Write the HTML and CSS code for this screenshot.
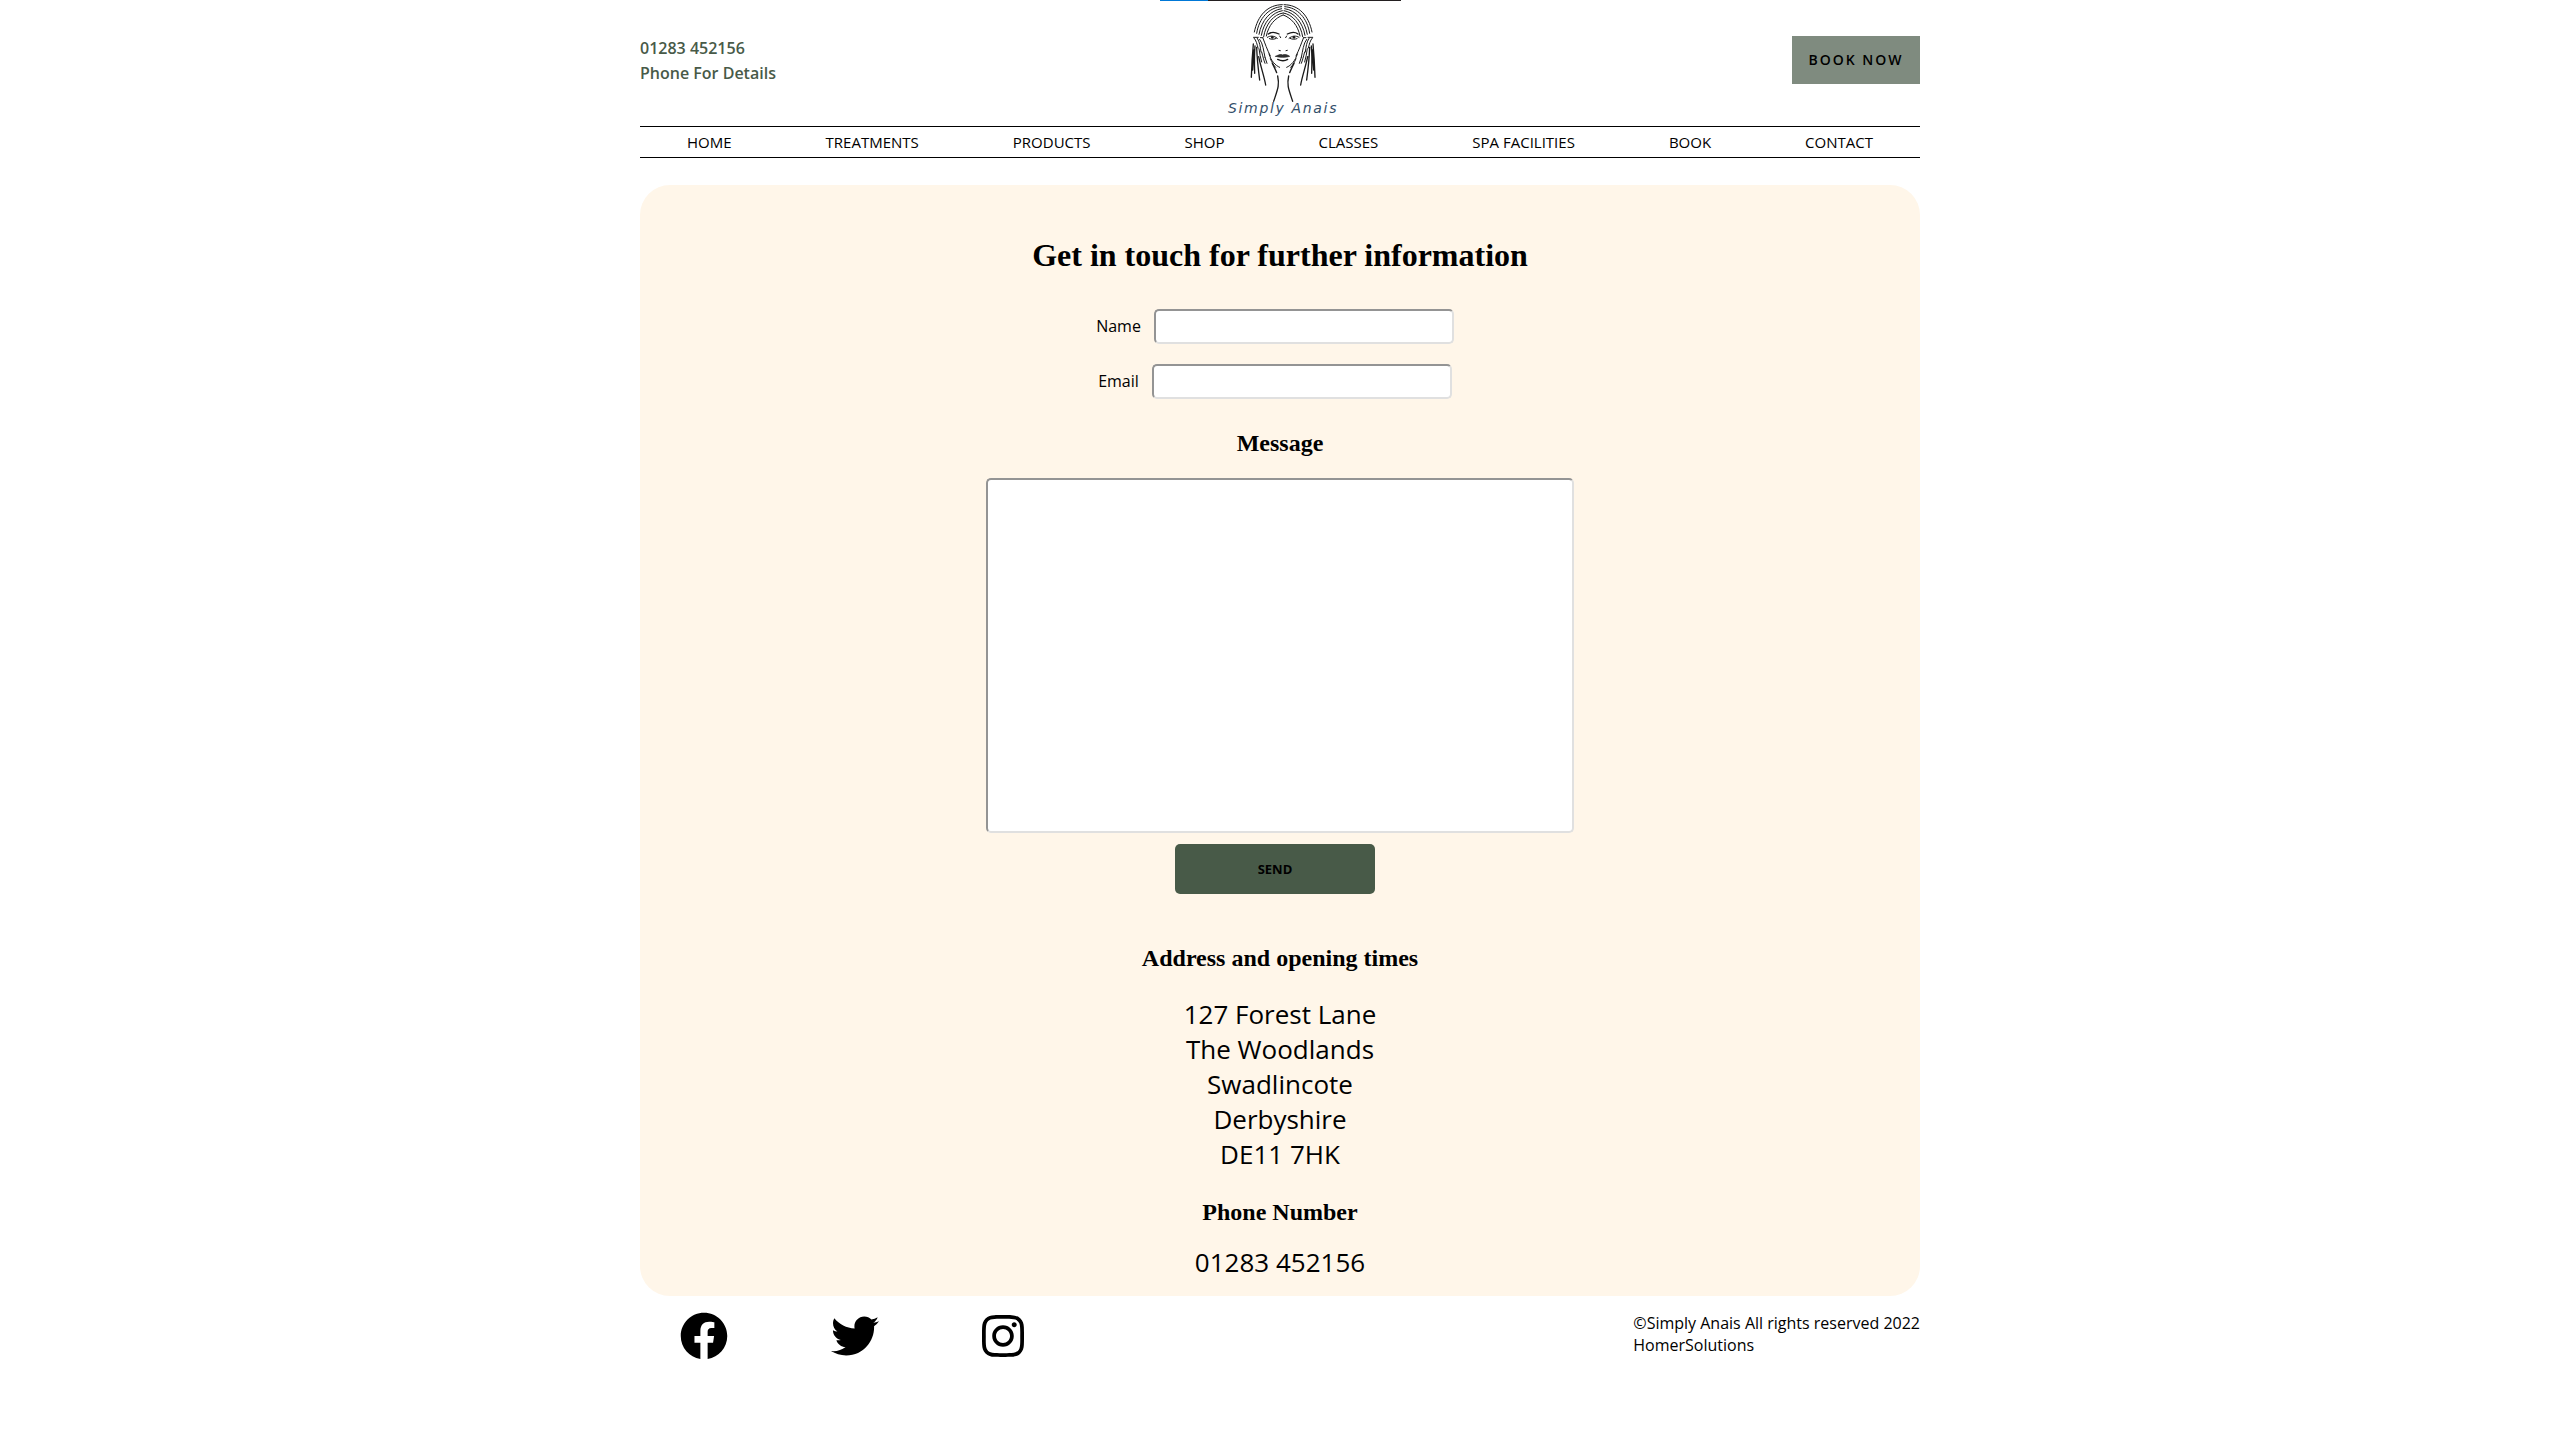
FILE: index.html
```html
<!DOCTYPE html>
<html lang="en">
<head>
<meta charset="utf-8">
<meta name="viewport" content="width=device-width, initial-scale=1">
<title>Simply Anais - Contact</title>
<link rel="stylesheet" href="styles.css">
</head>
<body>
<div class="progress"></div>
<div class="page">
  <header>
    <div class="masthead">
      <p class="phone">01283 452156<br>Phone For Details</p>
      <a class="logo" href="#" aria-label="Simply Anais home">
        <svg viewBox="-2 0 390 360" width="130" height="120" fill="none" stroke="#1a1a1a" stroke-width="3" stroke-linecap="round">
          <g id="half">
            <path d="M188 14C144 14 114 46 104 96M186 20C148 22 118 54 111 100M186 26C152 31 126 60 118 103M188 32C158 37 132 66 125 106M190 39C162 43 138 72 132 110M190 45C166 54 146 76 140 108"/>
            <path d="M146 102C155 95 166 96 178 102" stroke-width="4"/>
            <path d="M143 112C152 106 164 107 173 115M149 116C156 119 165 118 170 115"/>
            <circle cx="158" cy="112" r="4" fill="#1a1a1a" stroke="none"/>
            <path d="M102 112H116M122 113H130M103 114C110 122 112 132 115 144M113 115C120 126 122 140 124 156M130 115C136 130 142 148 152 168M120 118C130 130 132 154 136 172M118 146C120 160 122 172 126 186M126 156C130 170 132 180 136 190M136 172C138 178 140 184 142 190"/>
            <path d="M148 162C154 182 166 196 180 202M152 176C158 190 162 196 168 202"/>
            <path d="M101 132C98 164 96 200 95 232M106 138C104 162 104 190 105 220M111 142C112 172 116 210 120 240M117 170C124 204 134 230 138 255M103 150L99 210" stroke-width="4"/>
            <path d="M158 190C164 202 168 210 171 218M174 228C180 256 174 268 162 304" stroke-width="4"/>
            <path d="M178 151L182 152M180 108L183 113"/>
          </g>
          <use href="#half" transform="translate(381 0) scale(-1 1)"/>
          <path d="M168 169C178 163 184 163 189 165C194 163 202 163 210 169C200 173 178 173 168 169Z" fill="#333" stroke-width="2"/>
          <path d="M174 178C184 183 196 183 204 178" stroke-width="4"/>
          <text class="logo-name" x="25" y="340">Simply Anais</text>
        </svg>
      </a>
      <button class="book" type="button">BOOK NOW</button>
    </div>
    <nav class="menu">
      <a href="#">HOME</a>
      <a href="#">TREATMENTS</a>
      <a href="#">PRODUCTS</a>
      <a href="#">SHOP</a>
      <a href="#">CLASSES</a>
      <a href="#">SPA FACILITIES</a>
      <a href="#">BOOK</a>
      <a href="#">CONTACT</a>
    </nav>
  </header>
  <main class="panel">
    <h1>Get in touch for further information</h1>
    <form class="contact">
      <div class="field"><label for="name">Name</label><input id="name" type="text"></div>
      <div class="field"><label for="email">Email</label><input id="email" type="email"></div>
      <h2><label for="message">Message</label></h2>
      <textarea id="message"></textarea>
      <div class="actions"><button class="send" type="submit">SEND</button></div>
    </form>
    <h2>Address and opening times</h2>
    <address class="details">127 Forest Lane<br>The Woodlands<br>Swadlincote<br>Derbyshire<br>DE11 7HK</address>
    <h2>Phone Number</h2>
    <p class="details">01283 452156</p>
  </main>
  <footer class="footer">
    <div class="social">
      <a href="#" aria-label="Facebook"><svg width="48" height="48" viewBox="0 0 512 512"><path d="M504 256C504 119 393 8 256 8S8 119 8 256c0 123.78 90.69 226.38 209.25 245V327.69h-63V256h63v-54.64c0-62.15 37-96.48 93.67-96.48 27.14 0 55.52 4.84 55.52 4.84v61h-31.28c-30.8 0-40.41 19.12-40.41 38.73V256h68.78l-11 71.69h-57.78V501C413.31 482.38 504 379.78 504 256z"/></svg></a>
      <a href="#" aria-label="Twitter"><svg width="48" height="48" viewBox="0 0 512 512"><path d="M459.37 151.716c.325 4.548.325 9.097.325 13.645 0 138.72-105.583 298.558-298.558 298.558-59.452 0-114.68-17.219-161.137-47.106 8.447.974 16.568 1.299 25.34 1.299 49.055 0 94.213-16.568 130.274-44.832-46.132-.975-84.792-31.188-98.112-72.772 6.498.974 12.995 1.624 19.818 1.624 9.421 0 18.843-1.3 27.614-3.573-48.081-9.747-84.143-51.98-84.143-102.985v-1.299c13.969 7.797 30.214 12.67 47.431 13.319-28.264-18.843-46.781-51.005-46.781-87.391 0-19.492 5.197-37.36 14.294-52.954 51.655 63.675 129.3 105.258 216.365 109.807-1.624-7.797-2.599-15.918-2.599-24.04 0-57.828 46.782-104.934 104.934-104.934 30.213 0 57.502 12.67 76.67 33.137 23.715-4.548 46.456-13.32 66.599-25.34-7.798 24.366-24.366 44.833-46.132 57.827 21.117-2.273 41.584-8.122 60.426-16.243-14.292 20.791-32.161 39.308-52.628 54.253z"/></svg></a>
      <a href="#" aria-label="Instagram"><svg width="42" height="48" viewBox="0 0 448 512"><path d="M224.1 141c-63.6 0-114.9 51.3-114.9 114.9s51.3 114.9 114.9 114.9S339 319.5 339 255.9 287.7 141 224.1 141zm0 189.6c-41.1 0-74.7-33.5-74.7-74.7s33.5-74.7 74.7-74.7 74.7 33.5 74.7 74.7-33.6 74.7-74.7 74.7zm146.4-194.3c0 14.9-12 26.8-26.8 26.8-14.9 0-26.8-12-26.8-26.8s12-26.8 26.8-26.8 26.8 12 26.8 26.8zm76.1 27.2c-1.7-35.9-9.9-67.7-36.2-93.9-26.2-26.2-58-34.4-93.9-36.2-37-2.1-147.9-2.1-184.9 0-35.8 1.7-67.6 9.9-93.9 36.1s-34.4 58-36.2 93.9c-2.1 37-2.1 147.9 0 184.9 1.7 35.9 9.9 67.7 36.2 93.9s58 34.4 93.9 36.2c37 2.1 147.9 2.1 184.9 0 35.9-1.7 67.7-9.9 93.9-36.2 26.2-26.2 34.4-58 36.2-93.9 2.1-37 2.1-147.8 0-184.8zM398.8 388c-7.8 19.6-22.9 34.7-42.6 42.6-29.5 11.7-99.5 9-132.1 9s-102.7 2.6-132.1-9c-19.6-7.8-34.7-22.9-42.6-42.6-11.7-29.5-9-99.5-9-132.1s-2.6-102.7 9-132.1c7.8-19.6 22.9-34.7 42.6-42.6 29.5-11.7 99.5-9 132.1-9s102.7-2.6 132.1 9c19.6 7.8 34.7 22.9 42.6 42.6 11.7 29.5 9 99.5 9 132.1s2.7 102.7-9 132.1z"/></svg></a>
    </div>
    <p class="copyright">©Simply Anais All rights reserved 2022<br>HomerSolutions</p>
  </footer>
</div>
</body>
</html>
```

FILE: styles.css
```css
* {
  box-sizing: border-box;
}

body {
  margin: 0;
  background: #fff;
  color: #000;
  font: 16px/22px "Open Sans", "Noto Sans", sans-serif;
}

p,
h1,
h2 {
  margin: 0;
}

a {
  color: inherit;
  text-decoration: none;
}

button,
input,
textarea {
  font: inherit;
}

.progress {
  position: absolute;
  top: 0;
  left: 50%;
  width: 241px;
  height: 1px;
  margin-left: -120px;
  background: linear-gradient(to right, #0078d7 20%, #231f20 20%);
}

.page {
  max-width: 1280px;
  margin: 0 auto;
}

.masthead {
  display: flex;
  justify-content: space-between;
  align-items: center;
  margin-bottom: 6px;
}

.phone {
  padding-top: 2px;
  color: #485a48;
  font-weight: 600;
  line-height: 25px;
}

.logo svg {
  display: block;
}

.logo-name {
  fill: #34506b;
  stroke: none;
  font: italic 42px "DejaVu Sans", sans-serif;
  letter-spacing: 5px;
}

.book {
  width: 128px;
  height: 48px;
  padding: 0;
  border: 0;
  background: #7f8b7f;
  color: #000;
  font-size: 14px;
  font-weight: 600;
  letter-spacing: 2px;
}

.menu {
  display: flex;
  justify-content: space-around;
  padding: 4px 0;
  border: solid #000;
  border-width: 1px 0;
  font-size: 15px;
}

.panel {
  display: flex;
  flex-direction: column;
  align-items: center;
  margin-top: 27px;
  padding: 50px 20px 16px;
  border-radius: 30px;
  background: #fff6e9;
  text-align: center;
}

h1,
h2 {
  font-family: "Liberation Serif", serif;
  font-weight: 700;
}

h1 {
  font-size: 32px;
  line-height: 40px;
}

h2 {
  font-size: 24px;
  line-height: 30px;
}

.contact {
  display: flex;
  flex-direction: column;
  align-items: center;
  gap: 20px;
  width: 100%;
  margin: 34px 0 49px;
}

.field {
  display: flex;
  align-items: center;
  gap: 13px;
  padding-right: 10px;
}

.field label {
  padding-bottom: 2px;
}

input,
textarea {
  border: 2px solid;
  border-color: #949494 #e0e0e0 #e0e0e0 #949494;
  border-radius: 5px;
  background: #fff;
}

input {
  width: 300px;
  height: 35px;
}

.contact h2 {
  margin: 9px 0 0;
}

textarea {
  width: 100%;
  max-width: 588px;
  height: 355px;
  resize: none;
}

.actions {
  margin-top: -9px;
  padding-right: 10px;
}

.send {
  width: 200px;
  height: 50px;
  border: 0;
  border-radius: 5px;
  background: #485a48;
  color: #000;
  font-size: 13px;
  font-weight: 700;
}

.details {
  margin: 24px 0 25px;
  font-size: 26px;
  font-style: normal;
  line-height: 35px;
}

p.details {
  margin: 18px 0 0;
}

.footer {
  display: flex;
  justify-content: space-between;
  align-items: center;
  padding: 16px 0;
}

.social {
  display: flex;
  gap: 103px;
  padding-left: 40px;
}

.social svg {
  display: block;
}

.copyright {
  padding-bottom: 4px;
}
```
